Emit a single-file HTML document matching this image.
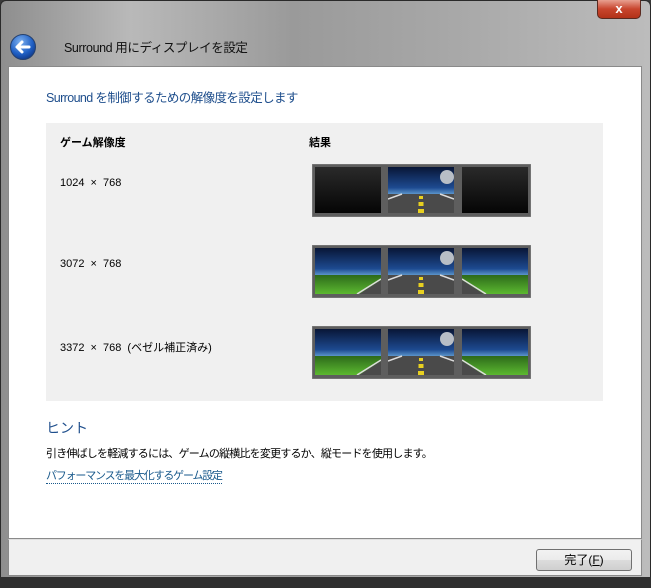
<!DOCTYPE html>
<html><head><meta charset="utf-8"><style>
*{margin:0;padding:0;box-sizing:border-box}
body{width:651px;height:588px;overflow:hidden;background:#3a3a3a;font-family:"Liberation Sans","Noto Sans CJK JP",sans-serif;font-size:12px;color:#000;position:relative}
.frame{position:absolute;left:0;top:0;width:651px;height:588px;background:linear-gradient(90deg,#8e8e8e 0%,#b9b9b9 20%,#9a9a9a 45%,#a8a8a8 70%,#bcbcbc 100%);border:1px solid #2a2a2a;border-radius:6px 6px 0 0}
.close{position:absolute;left:597px;top:0;width:44px;height:19px;background:linear-gradient(#e8a090,#c8452d 50%,#b23218);border:1px solid #5a2a20;border-top:none;border-radius:0 0 5px 5px;color:#fff;font-weight:bold;text-align:center;font-size:13px;line-height:17px}
.title{position:absolute;left:64px;top:37px;font-size:12.5px;letter-spacing:-0.4px;color:#111}
.back{position:absolute;left:9px;top:33px}
.content{position:absolute;left:8px;top:66px;width:634px;height:473px;background:#fff;border:1px solid #8a8a8a}
.footer{position:absolute;left:8px;top:539px;width:634px;height:37px;background:#f0f0f0;border:1px solid #8a8a8a;border-top:1px solid #dfdfdf}
.bottom{position:absolute;left:0;top:577px;width:651px;height:11px;background:#2f2f2f}
.h{position:absolute;left:46px;top:87px;color:#1e4e8c;font-size:12.5px;letter-spacing:-0.6px}
.panel{position:absolute;left:46px;top:123px;width:557px;height:278px;background:#f0f0f0}
.lbl{position:absolute;font-size:11px;word-spacing:3px}
.b{font-weight:bold}
.mon{position:absolute;left:312px}
.hint{position:absolute;left:46px;top:418px;color:#1e4e8c;font-size:14px}
.t{position:absolute;left:46px;top:445px;font-size:11px;letter-spacing:-0.8px}
.link{position:absolute;left:46px;top:470px;font-size:11px;letter-spacing:-1.2px;color:#1a5a8c;border-bottom:1px dotted #1a5a8c;line-height:13px}
.btn{position:absolute;left:536px;top:549px;width:96px;height:22px;border:1px solid #707070;border-radius:3px;background:linear-gradient(#f2f2f2,#ebebeb 50%,#dcdcdc 51%,#cfcfcf);text-align:center;line-height:20px;font-size:12px}
</style></head><body>
<div class="frame"></div>
<div class="close">x</div>
<svg class="back" width="28" height="28" viewBox="0 0 28 28"><defs><radialGradient id="bg" cx="0.4" cy="0.3" r="0.8"><stop offset="0" stop-color="#7fb2f0"/><stop offset="0.6" stop-color="#1f5fc4"/><stop offset="1" stop-color="#0c2f7a"/></radialGradient></defs><circle cx="14" cy="14" r="12.5" fill="url(#bg)" stroke="#24406e"/><path d="M20 14H9M13 9l-5 5 5 5" stroke="#fff" stroke-width="3" fill="none" stroke-linecap="round" stroke-linejoin="round"/></svg>
<div class="title">Surround 用にディスプレイを設定</div>
<div class="content"></div>
<div class="h">Surround を制御するための解像度を設定します</div>
<div class="panel"></div>
<div class="lbl b" style="left:60px;top:134px">ゲーム解像度</div>
<div class="lbl b" style="left:309px;top:134px">結果</div>
<div class="lbl" style="left:60px;top:177px">1024 × 768</div>
<div class="lbl" style="left:60px;top:258px">3072 × 768</div>
<div class="lbl" style="left:60px;top:339px">3372 × 768 (ベゼル補正済み)</div>
<svg width="0" height="0" style="position:absolute"><defs>
<linearGradient id="sky" x1="0" y1="0" x2="0" y2="1"><stop offset="0" stop-color="#081636"/><stop offset="0.45" stop-color="#1d4a90"/><stop offset="0.62" stop-color="#6aa6d8"/></linearGradient>
<linearGradient id="blk" x1="0" y1="0" x2="0" y2="1"><stop offset="0" stop-color="#2a2a2a"/><stop offset="1" stop-color="#050505"/></linearGradient>
<linearGradient id="grass" x1="0" y1="0" x2="0" y2="1"><stop offset="0" stop-color="#2d6a1a"/><stop offset="1" stop-color="#5cb830"/></linearGradient>
<symbol id="black" viewBox="0 0 66 46"><rect width="66" height="46" fill="url(#blk)"/></symbol>
<symbol id="mid" viewBox="0 0 66 46"><rect width="66" height="46" fill="url(#sky)"/><circle cx="59" cy="10" r="7" fill="#b8bec6"/><rect y="27" width="66" height="19" fill="#4a4a4a"/><path d="M0 32L14 27M66 32L52 27" stroke="#ddd" stroke-width="1.5"/><rect x="31" y="29" width="4" height="3" fill="#e8d020"/><rect x="30.5" y="35" width="5" height="4" fill="#e8d020"/><rect x="30" y="42" width="6" height="4" fill="#e8d020"/></symbol>
<symbol id="left" viewBox="0 0 66 46"><rect width="66" height="46" fill="url(#sky)"/><rect y="27" width="66" height="19" fill="url(#grass)"/><path d="M44 46L66 32V46Z" fill="#4a4a4a"/><path d="M42 46L66 31" stroke="#ddd" stroke-width="1.5"/></symbol>
<symbol id="right" viewBox="0 0 66 46"><rect width="66" height="46" fill="url(#sky)"/><rect y="27" width="66" height="19" fill="url(#grass)"/><path d="M22 46L0 32V46Z" fill="#4a4a4a"/><path d="M24 46L0 31" stroke="#ddd" stroke-width="1.5"/></symbol>
</defs></svg>
<svg class="mon" style="top:164px" width="219" height="53"><rect x="0" y="0" width="219" height="53" fill="#5e5e5e" stroke="#888"/><use href="#black" x="3" y="3" width="66" height="46"/><use href="#mid" x="76" y="3" width="66" height="46"/><use href="#black" x="150" y="3" width="66" height="46"/></svg>
<svg class="mon" style="top:245px" width="219" height="53"><rect x="0" y="0" width="219" height="53" fill="#5e5e5e" stroke="#888"/><use href="#left" x="3" y="3" width="66" height="46"/><use href="#mid" x="76" y="3" width="66" height="46"/><use href="#right" x="150" y="3" width="66" height="46"/></svg>
<svg class="mon" style="top:326px" width="219" height="53"><rect x="0" y="0" width="219" height="53" fill="#5e5e5e" stroke="#888"/><use href="#left" x="3" y="3" width="66" height="46"/><use href="#mid" x="76" y="3" width="66" height="46"/><use href="#right" x="150" y="3" width="66" height="46"/></svg>
<div class="hint">ヒント</div>
<div class="t">引き伸ばしを軽減するには、ゲームの縦横比を変更するか、縦モードを使用します。</div>
<div class="link">パフォーマンスを最大化するゲーム設定</div>
<div class="footer"></div>
<div class="btn">完了(<u>F</u>)</div>
<div class="bottom"></div>
</body></html>
